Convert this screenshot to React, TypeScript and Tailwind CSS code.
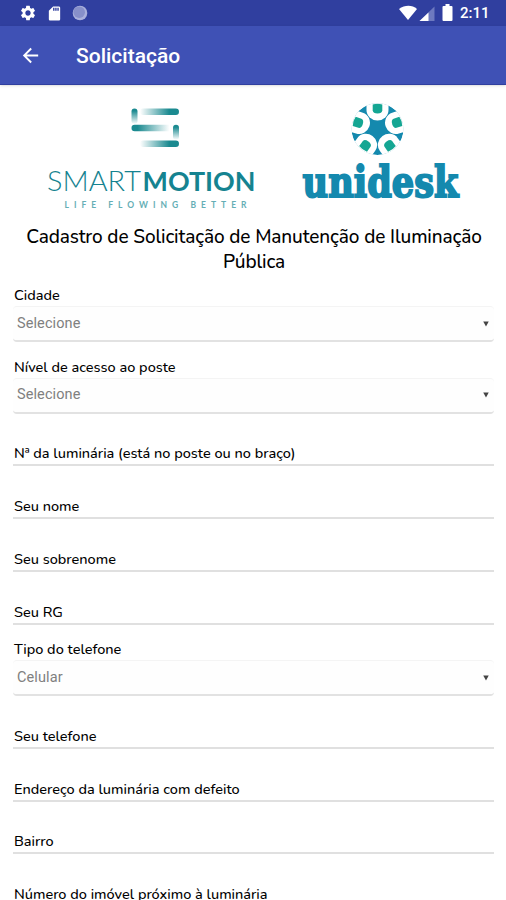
import { MdArrowBack, MdSettings, MdSdCard } from 'react-icons/md'

type Field = {
  label: string
  type: 'select' | 'text'
  value?: string
}

const fields: Field[] = [
  { label: 'Cidade', type: 'select', value: 'Selecione' },
  { label: 'Nível de acesso ao poste', type: 'select', value: 'Selecione' },
  { label: 'Nª da luminária (está no poste ou no braço)', type: 'text' },
  { label: 'Seu nome', type: 'text' },
  { label: 'Seu sobrenome', type: 'text' },
  { label: 'Seu RG', type: 'text' },
  { label: 'Tipo do telefone', type: 'select', value: 'Celular' },
  { label: 'Seu telefone', type: 'text' },
  { label: 'Endereço da luminária com defeito', type: 'text' },
  { label: 'Bairro', type: 'text' },
  { label: 'Número do imóvel próximo à luminária', type: 'text' },
]

function StatusBar() {
  return (
    <div className="flex h-[26px] items-center justify-between bg-[#303f9f] pl-[19px] pr-4 text-white">
      <div className="flex items-center gap-[9px]">
        <MdSettings size={18} />
        <MdSdCard size={17} />
        <svg width="16" height="16" viewBox="0 0 16 16">
          <circle cx="8" cy="8" r="7.3" fill="#a9b0dc" />
          <circle cx="7.2" cy="7.2" r="5.8" fill="#8790ca" />
        </svg>
      </div>
      <div className="flex items-center">
        <svg width="56" height="20" viewBox="0 0 56 20">
          <path d="M0 6C6 1.600 13 1.600 18 6L9 17Z" fill="#fff" />
          <path d="M35.500 3.500V18H20.500Z" fill="#6d79bf" />
          <path d="M29.500 9.500V18H20.500Z" fill="#fff" />
          <path d="M46.500 1h4v2h2q1 0 1 1v13q0 1-1 1h-8q-1 0-1-1V4q0-1 1-1h2Z" fill="#fff" />
        </svg>
        <span className="ml-[5px] w-[30px] whitespace-nowrap text-[15px] font-medium leading-none">2:11</span>
      </div>
    </div>
  )
}

function SmartMotionLogo() {
  return (
    <svg width="216" height="112" viewBox="44 100 216 112">
      <defs>
        <linearGradient id="toRight">
          <stop offset="0" stopColor="#1b8a90" stopOpacity="0" />
          <stop offset="0.75" stopColor="#1b8a90" />
        </linearGradient>
        <linearGradient id="toLeft">
          <stop offset="0.15" stopColor="#1b8a90" />
          <stop offset="0.95" stopColor="#1b8a90" stopOpacity="0" />
        </linearGradient>
        <linearGradient id="down" x1="0" y1="0" x2="0" y2="1">
          <stop offset="0.15" stopColor="#1b8a90" />
          <stop offset="1" stopColor="#1b8a90" stopOpacity="0" />
        </linearGradient>
      </defs>
      <rect x="131.500" y="108.500" width="6" height="15.500" rx="3" fill="url(#down)" />
      <rect x="140" y="108.500" width="39" height="6.500" rx="3.200" fill="url(#toRight)" />
      <rect x="131.500" y="124.800" width="40" height="6.500" rx="3.200" fill="url(#toLeft)" />
      <rect x="173" y="124.800" width="6" height="15" rx="3" fill="url(#down)" />
      <rect x="140" y="140.500" width="39" height="6.500" rx="3.200" fill="url(#toRight)" />
      <g className="font-['Lato',sans-serif]" fill="#158390">
        <text x="47" y="190.500" fontSize="27" fontWeight="300" textLength="94" lengthAdjust="spacingAndGlyphs">SMART</text>
        <text x="142.500" y="190.500" fontSize="27" fontWeight="700" textLength="113" lengthAdjust="spacingAndGlyphs">MOTION</text>
        <text x="64.500" y="207.500" fontSize="8.500" fontWeight="700" fill="#65aeb5" textLength="182">LIFE FLOWING BETTER</text>
      </g>
    </svg>
  )
}

function UnideskLogo() {
  return (
    <svg width="164" height="112" viewBox="299 100 164 112">
      <defs>
        <clipPath id="disc">
          <circle r="26" />
        </clipPath>
      </defs>
      <g transform="translate(377.500 129)" clipPath="url(#disc)">
        <circle r="26" fill="#1489ae" />
        {[0, 72, 144, 216, 288].map((angle) => (
          <g key={angle} transform={`rotate(${angle})`}>
            <path d="M-11-30V-19a11 10.500 0 0 0 22 0V-30Z" fill="#fff" />
            <path d="M-4.800-24.500Q0-26 4.800-24.500V-18.500Q4.500-15.500 0-15.500T-4.800-18.500Z" fill="#14a693" />
          </g>
        ))}
      </g>
      <text
        x="302.500"
        y="196.500"
        fontSize="42"
        fontWeight="700"
        fill="#1489ae"
        stroke="#1489ae"
        strokeWidth="2"
        textLength="156"
        lengthAdjust="spacingAndGlyphs"
        className="font-['DejaVu_Serif',serif]"
      >
        unidesk
      </text>
    </svg>
  )
}

function SelectField({ field }: { field: Field }) {
  return (
    <div className="pt-[15.5px]">
      <div className="h-5 whitespace-nowrap pl-px text-[14.5px] font-medium leading-[19px]">{field.label}</div>
      <div className="flex h-9 items-center justify-between rounded-sm border-b-2 border-t border-b-[#e2e2e2] border-t-[#f4f4f4] bg-[#fefefe] pl-1 pr-[5px] font-['Roboto',sans-serif] text-[14.5px] tracking-[0.1px] text-[#808080]">
        <span>{field.value}</span>
        <svg width="6" height="6" viewBox="0 0 7 6">
          <path d="M0.300 0H6.700L3.500 6Z" fill="#444" />
        </svg>
      </div>
    </div>
  )
}

function TextField({ field }: { field: Field }) {
  return (
    <div className="flex h-[52.75px] flex-col justify-end border-b-2 border-[#e0e0e0] pb-[1px]">
      <div className="whitespace-nowrap pl-px text-[14.5px] font-medium leading-5">{field.label}</div>
    </div>
  )
}

export default function App() {
  return (
    <div className="h-[900px] w-[506px] overflow-hidden bg-white font-['Roboto',sans-serif]">
      <StatusBar />
      <header className="flex h-[59px] items-center border-b border-[#303f9f] bg-[#3f51b5] pl-[19px] text-white shadow-sm">
        <MdArrowBack size={23} />
        <h1 className="ml-[34px] mt-[3px] text-[21px] font-medium">Solicitação</h1>
      </header>

      <main className="pl-[13px] pr-3 pt-[15px] font-['Nunito',sans-serif] text-black">
        <div className="flex h-[123px] items-start justify-between px-[31px]">
          <SmartMotionLogo />
          <UnideskLogo />
        </div>
        <h2 className="h-[47.5px] whitespace-nowrap pl-px pt-0.5 text-center text-[19px] font-medium leading-[25px] tracking-[-0.12px]">
          Cadastro de Solicitação de Manutenção de Iluminação
          <br />
          Pública
        </h2>
        {fields.map((field) =>
          field.type === 'select' ? (
            <SelectField key={field.label} field={field} />
          ) : (
            <TextField key={field.label} field={field} />
          ),
        )}
      </main>
    </div>
  )
}
